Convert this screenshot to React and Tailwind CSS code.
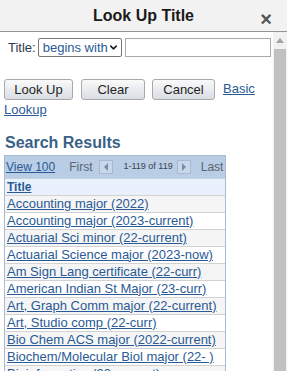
import { ChevronDown } from "lucide-react";

const rows = [
  "Accounting major (2022)",
  "Accounting major (2023-current)",
  "Actuarial Sci minor (22-current)",
  "Actuarial Science major (2023-now)",
  "Am Sign Lang certificate (22-curr)",
  "American Indian St Major (23-curr)",
  "Art, Graph Comm major (22-current)",
  "Art, Studio comp (22-curr)",
  "Bio Chem ACS major (2022-current)",
  "Biochem/Molecular Biol major (22- )",
  "Bioinformatics (23-current)",
];

function Btn({ children, w }) {
  return (
    <button
      className={`h-[21px] shrink-0 rounded-[3px] border border-[#a9a9a9] bg-gradient-to-b from-[#fafafa] to-[#d9dde3] text-[13px] text-[#1f1f1f] ${w}`}
    >
      {children}
    </button>
  );
}

function Arrow({ dir }) {
  return (
    <span className="flex h-[14px] w-[14px] shrink-0 items-center justify-center border border-[#a6bbd2] bg-[#c9d8e8]">
      <svg width="6" height="8" viewBox="0 0 6 8">
        {dir === "left" ? (
          <path d="M5 0 L1 4 L5 8 Z" fill="#6f8fb0" />
        ) : (
          <path d="M1 0 L5 4 L1 8 Z" fill="#6f8fb0" />
        )}
      </svg>
    </span>
  );
}

export default function App() {
  return (
    <div className="flex h-[371px] w-[287px] flex-col overflow-hidden whitespace-nowrap bg-white font-['Liberation_Sans',Arial,sans-serif]">
      <div className="relative flex h-[32px] shrink-0 items-center justify-center border-b border-[#8f959b] bg-[#f2f2f2]">
        <span className="text-[16px] font-bold text-[#1a1a1a]">Look Up Title</span>
        <span className="absolute right-[15px] top-[4px] text-[20px] font-bold text-[#555]">×</span>
      </div>
      <div className="flex min-h-0 flex-1">
        <div className="w-[273px] shrink-0 overflow-hidden">
          <div className="mt-[6px] flex items-center pl-[8px]">
            <span className="mr-[2px] text-[13px] text-[#2b3a4a]">Title:</span>
            <div className="flex h-[19px] w-[84px] shrink-0 items-center justify-between rounded-[2px] border border-[#767676] pl-[4px] pr-[3px]">
              <span className="text-[13px] text-[#2a5a96]">begins with</span>
              <ChevronDown size={11} strokeWidth={3.5} className="shrink-0 text-[#222]" />
            </div>
            <div className="ml-[3px] h-[19px] w-[146px] shrink-0 border border-[#a9a9a9]" />
          </div>
          <div className="mt-[21px] flex items-center pl-[4px]">
            <Btn w="w-[69px]">Look Up</Btn>
            <span className="w-[8px] shrink-0" />
            <Btn w="w-[64px]">Clear</Btn>
            <span className="w-[7px] shrink-0" />
            <Btn w="w-[63px]">Cancel</Btn>
            <a className="ml-[8px] text-[13px] text-[#2a5a96] underline">Basic</a>
          </div>
          <a className="ml-[4px] mt-[1px] block text-[13px] leading-[18px] text-[#2a5a96] underline">Lookup</a>
          <div className="mt-[14px] pl-[5px] text-[16px] font-bold leading-[20px] text-[#3a5f88]">Search Results</div>
          <div className="ml-[4px] mt-[2px] w-[222px] border border-[#a6bbd2]">
            <div className="flex h-[22px] items-center bg-[#b9cde5] pl-[1px] text-[12px]">
              <a className="text-[#2a5a96] underline">View 100</a>
              <span className="ml-[14px] text-[#5a6470]">First</span>
              <span className="ml-[7px]"><Arrow dir="left" /></span>
              <span className="ml-[10px] text-[9px] text-[#3a4450]">1-119 of 119</span>
              <span className="ml-[4px]"><Arrow dir="right" /></span>
              <span className="ml-[10px] text-[#5a6470]">Last</span>
            </div>
            <div className="flex h-[17px] items-center border-t border-[#c7d3e0] bg-[#e9f2fc] pl-[2px]">
              <a className="text-[12px] font-bold text-[#2a5a96] underline">Title</a>
            </div>
            {rows.map((r, i) => (
              <div
                key={r}
                className={`flex h-[17px] items-center border-t border-[#d2d2d2] pl-[2px] ${i % 2 === 0 ? "bg-[#f5f5f5]" : "bg-white"}`}
              >
                <a className="text-[13px] text-[#2a5a96] underline">{r}</a>
              </div>
            ))}
          </div>
        </div>
        <div className="flex w-[14px] shrink-0 flex-col bg-[#f1f1f1]">
          <div className="flex h-[17px] items-center justify-center">
            <svg width="8" height="5" viewBox="0 0 8 5">
              <path d="M0 5 L4 0 L8 5 Z" fill="#a3a3a3" />
            </svg>
          </div>
          <div className="mx-[1px] flex-1 bg-[#c1c1c1]" />
        </div>
      </div>
    </div>
  );
}
